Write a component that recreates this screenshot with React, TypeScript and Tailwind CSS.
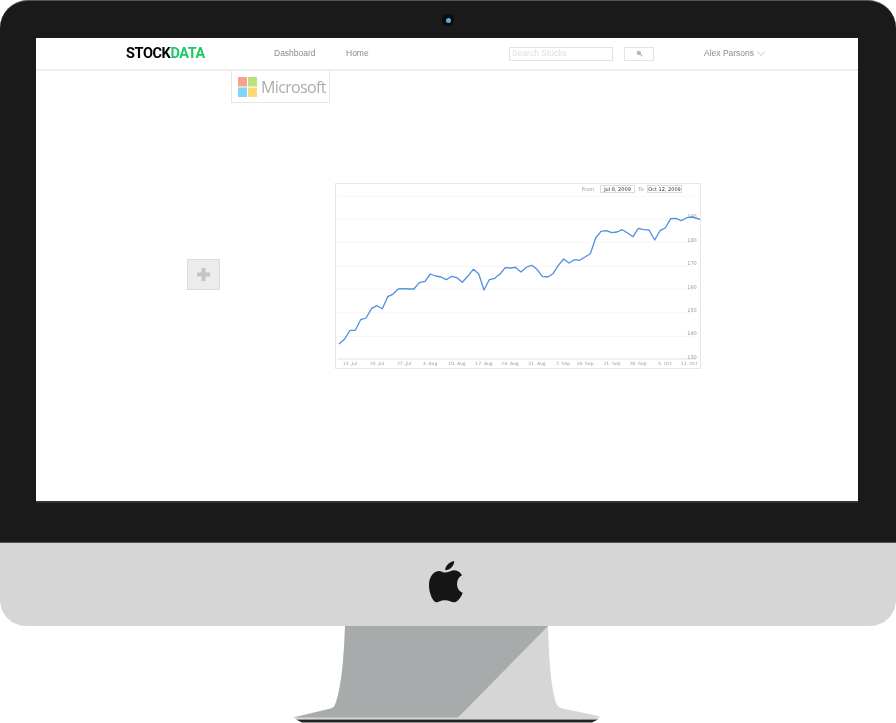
const z3 = [[27,498],[44,483],[60,457],[76,457],[92,425],[108,420],[125,391],[141,383],[157,392],[173,356],[188,349],[205,333],[221,332],[237,333],[252,333],[268,314],[285,310],[301,288],[317,294],[333,297],[349,305],[365,295],[381,299],[397,313],[413,295],[430,274],[446,287],[462,336],[478,305],[494,301],[510,288],[526,269],[542,270],[558,268]];
const z4 = [[0,267],[18,282],[35,267],[50,262],[66,274],[82,295],[98,297],[114,287],[130,262],[146,243],[162,255],[178,245],[194,247],[210,237],[226,227],[242,180],[258,160],[274,158],[290,164],[306,162],[322,155],[338,165],[354,176],[370,151],[386,155],[402,156],[419,186],[435,158],[451,150],[467,122],[483,121],[499,128],[515,119],[531,117],[556,124]];
const pts = [
  ...z3.map(([x, y]) => [x / 3 - 5, y / 3 - 5]),
  ...z4.map(([x, y]) => [180 + x / 3, y / 3 - 5]),
];
const polyline = pts.map(([x, y]) => `${x.toFixed(1)},${y.toFixed(1)}`).join(" ");
const grid = [13.3, 36.3, 59.3, 83.3, 106.3, 129.7, 153.3];
const yLabels = [["190",33],["180",57],["170",80.3],["160",103.7],["150",127],["140",150.3],["130",173.7]] as const;
const xLabels = [["13. Jul",15],["20. Jul",42],["27. Jul",69],["3. Aug",95],["10. Aug",122],["17. Aug",149],["24. Aug",175],["31. Aug",202],["7. Sep",228],["14. Sep",250],["21. Sep",277],["28. Sep",303],["5. Oct",330],["12. Oct",354]] as const;

function Chart() {
  return (
    <div className="flex h-[186px] w-[366px] flex-col border border-[#e6e6e6] bg-white font-['DejaVu_Sans',sans-serif]">
      <div className="flex h-[12px] items-start justify-end pr-[18px] pt-[1px] text-[5px] leading-[7px] text-[#999]">
        <span className="w-[24px] text-center leading-[8px]">From</span>
        <span className="flex h-[8px] w-[35px] items-center justify-center border border-[#ddd] text-[#333]">Jul 8, 2009</span>
        <span className="w-[12px] text-center leading-[8px]">To</span>
        <span className="flex h-[8px] w-[35px] items-center justify-center border border-[#ddd] text-[#333]">Oct 12, 2009</span>
      </div>
      <svg viewBox="1 13 364 172" className="h-[172px] w-[364px]" fontFamily="DejaVu Sans, sans-serif">
        {grid.map((y) => (
          <line key={y} x1="2" x2="358" y1={y} y2={y} stroke="#f6f6f6" strokeWidth="1" />
        ))}
        <line x1="2" x2="361" y1="176" y2="176" stroke="#dde2ea" strokeWidth="1" />
        {yLabels.map(([t, y]) => (
          <text key={t} x="357" y={y + 1.8} textAnchor="middle" fontSize="5" fill="#999">{t}</text>
        ))}
        {xLabels.map(([t, x]) => (
          <text key={t} x={x} y="182" textAnchor="middle" fontSize="4.500" fill="#999">{t}</text>
        ))}
        <polyline points={polyline} fill="none" stroke="#4f8fe0" strokeWidth="1.3" strokeLinejoin="round" />
      </svg>
    </div>
  );
}

function Screen() {
  return (
    <div className="h-[463px] w-[822px] bg-white font-['Liberation_Sans',sans-serif] blur-[0.3px]">
      <nav className="flex h-[33px] items-center border-b-2 border-[#eeeeee]">
        <div className="ml-[90px] w-[148px] font-['Roboto',sans-serif] text-[14.5px] font-bold tracking-[-0.4px]">
          <span className="text-black">STOCK</span>
          <span className="text-[#1fc866]">DATA</span>
        </div>
        <span className="w-[72px] text-[8.5px] text-[#8a8a8a]">Dashboard</span>
        <span className="w-[163px] text-[8.5px] text-[#8a8a8a]">Home</span>
        <div className="flex h-[14px] w-[104px] items-center border border-[#e3e3e3] pl-[2px] text-[8.5px] text-[#dedede]">Search Stocks</div>
        <div className="ml-[11px] flex h-[14px] w-[30px] items-center justify-center border border-[#e3e3e3]">
          <svg width="7" height="7" viewBox="0 0 6 6"><circle cx="2.500" cy="2.500" r="1.900" fill="#bbb" /><line x1="3.500" y1="3.500" x2="5.500" y2="5.500" stroke="#bbb" /></svg>
        </div>
        <span className="ml-[50px] text-[8.5px] text-[#8a8a8a]">Alex Parsons</span>
        <svg width="8" height="5" viewBox="0 0 8 5" className="ml-[3px]"><path d="M.5.5 4 4.500 7.500.5" fill="none" stroke="#aaa" strokeWidth=".6" /></svg>
      </nav>
      <div className="ml-[195px] flex h-[32px] w-[99px] items-center gap-[4px] border border-t-0 border-[#e6e6e6] pl-[6px]">
        <svg width="19" height="20" viewBox="0 0 19 20">
          <rect width="9" height="9.500" fill="#f6a388" />
          <rect x="10" width="9" height="9.500" fill="#bde07f" />
          <rect y="10.500" width="9" height="9.500" fill="#7fd4f8" />
          <rect x="10" y="10.500" width="9" height="9.500" fill="#fdd973" />
        </svg>
        <span className="font-['Open_Sans',sans-serif] text-[16px] leading-[22px] tracking-[-0.65px] text-[#adadad]">Microsoft</span>
      </div>
      <div className="mt-[80px] flex items-start">
        <div className="ml-[151px] mt-[76px] flex h-[31px] w-[33px] items-center justify-center border border-[#dcdcdc] bg-[#ececec]">
          <svg width="13" height="13" viewBox="0 0 13 13"><path d="M4.500 0h4v4.500H13v4H8.500V13h-4V8.500H0v-4h4.500z" fill="#c4c4c4" /></svg>
        </div>
        <div className="ml-[115px]"><Chart /></div>
      </div>
    </div>
  );
}

export default function App() {
  return (
    <div className="h-[723px] w-[896px] overflow-hidden bg-white">
      <div className="relative flex h-[542px] w-[896px] flex-col items-start rounded-t-[28px] border-t border-[#555] bg-[#1a1a1a] pl-[36px] pt-[37px]">
        <div className="absolute left-[442px] top-[13px] flex h-[12px] w-[12px] items-center justify-center rounded-full bg-[#0b0b0b]">
          <div className="h-[5px] w-[5px] rounded-full bg-[#4fb5dc]" />
        </div>
        <div className="border-b-2 border-[#333]"><Screen /></div>
      </div>
      <div className="flex h-[84px] w-[896px] items-start justify-center rounded-b-[26px] border-t border-[#555] bg-[#d6d6d6] pt-[17px]">
        <svg width="34" height="43" viewBox="87 60 103 128" className="mr-[4px]">
          <path d="M135 97C145 97 155 90 165 90C173 91 181 95 187 105C177 110 172 120 172 132C172 145 180 154 189 158C185 170 177 181 168 186C158 190 148 180 135 181C122 180 113 190 106 186C96 180 87 155 87 135C87 110 100 94 116 92C124 92 130 97 135 97ZM136 90C136 78 148 65 163 62C164 76 151 90 136 90Z" fill="#151515" />
        </svg>
      </div>
      <svg width="896" height="97" viewBox="0 626 896 97" className="block">
        <path d="M345 626H548C549 660 551 690 557 705Q559 708 562 708.500L599 716Q600 718 598 719H296Q293 718 294 717L331 708.500Q334 708 335 705C341 690 344 660 345 626Z" fill="#d6d6d6" />
        <path d="M345 626H548L458 717.500H294L331 708.500Q334 708 335 705C341 690 344 660 345 626Z" fill="#a7abac" />
        <path d="M296 719.500H598L592 722.500H302Z" fill="#222" />
      </svg>
    </div>
  );
}
